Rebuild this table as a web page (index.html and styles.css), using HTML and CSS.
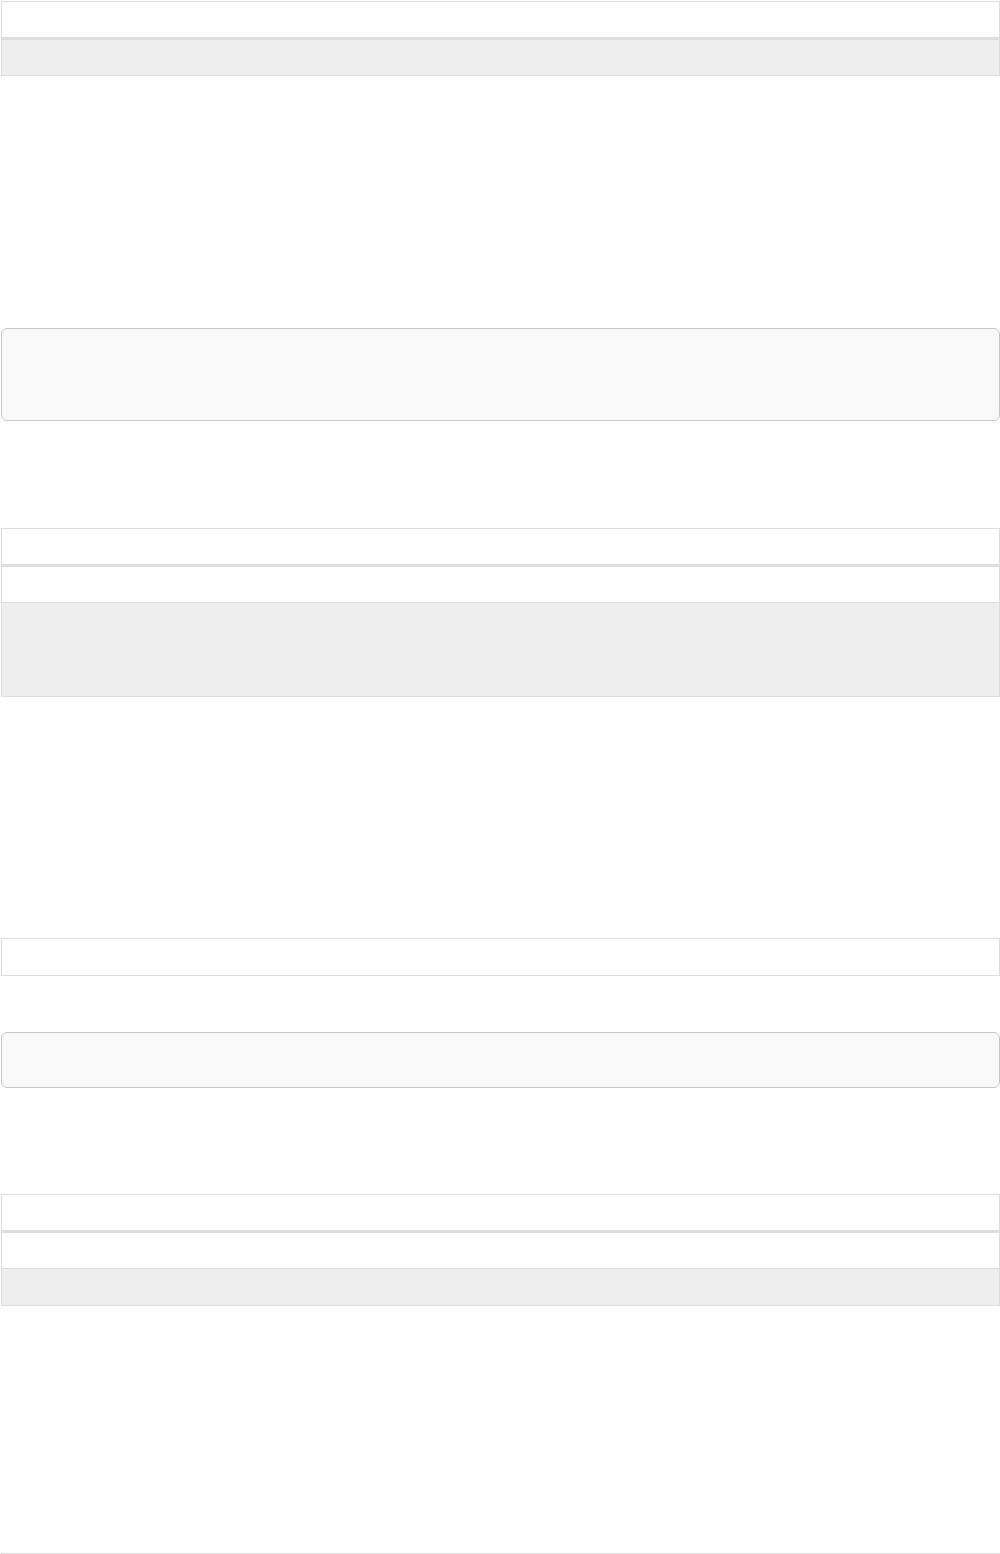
FILE: index.html
```html
<!DOCTYPE html>
<html>
<head>
<meta charset="utf-8">
<link rel="stylesheet" href="styles.css">
</head>
<body>
<div class="page">
  <div class="tbl t1">
    <div class="row hd"></div>
    <div class="row shade"></div>
  </div>

  <div class="code c1"></div>

  <div class="tbl t2">
    <div class="row hd"></div>
    <div class="row sep"></div>
    <div class="row shade tall"></div>
  </div>

  <div class="tbl t3">
    <div class="row single"></div>
  </div>

  <div class="code c2"></div>

  <div class="tbl t4">
    <div class="row hd"></div>
    <div class="row sep"></div>
    <div class="row shade r36"></div>
  </div>

  <div class="tbl t5"></div>
</div>
</body>
</html>
```

FILE: styles.css
```css
html, body {
  margin: 0;
  padding: 0;
  background: #ffffff;
  font-family: "Liberation Sans", Arial, sans-serif;
}

.page {
  padding: 1px 0 0 1px;
  display: flex;
  flex-direction: column;
  align-items: flex-start;
}

.tbl {
  box-sizing: border-box;
  width: 999px;
  border: 1px solid #dddddd;
  display: flex;
  flex-direction: column;
}

.row {
  height: 35px;
  background: #ffffff;
}

.row.hd {
  border-bottom: 3px solid #dddddd;
}

.row.sep {
  border-bottom: 1px solid #dddddd;
}

.row.shade {
  background: #eeeeee;
}

.row.tall {
  height: 93px;
}

.row.r36 {
  height: 36px;
}

.row.single {
  height: 36px;
}

.code {
  box-sizing: border-box;
  width: 999px;
  border: 1px solid #c8c8c8;
  border-radius: 6px;
  background: #f9f9f9;
}

.c1 {
  margin-top: 252px;
  height: 93px;
}

.t2 {
  margin-top: 107px;
}

.t3 {
  margin-top: 241px;
}

.c2 {
  margin-top: 56px;
  height: 56px;
}

.t4 {
  margin-top: 106px;
}

.t5 {
  margin-top: 247px;
  border-width: 1px 0 0 0;
  height: 1px;
}
```
